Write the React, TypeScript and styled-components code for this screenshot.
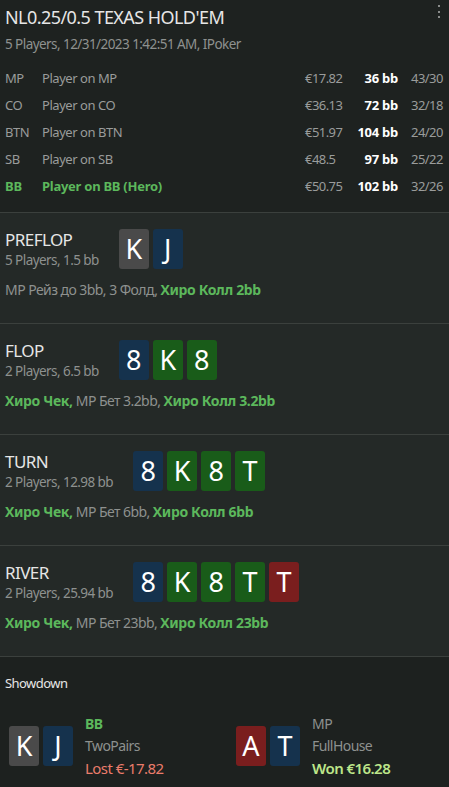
import React from "react";
import styled, { createGlobalStyle } from "styled-components";

const Global = createGlobalStyle`
  html, body { margin: 0; padding: 0; background: #1e2220; }
  body { font-family: "Noto Sans", "Open Sans", sans-serif; letter-spacing: -0.035em; -webkit-font-smoothing: antialiased; }
  * { box-sizing: border-box; }
`;

const Page = styled.div`
  width: 449px;
  min-height: 787px;
  background: #1e2220;
  display: flex;
  flex-direction: column;
`;

const Header = styled.header`
  position: relative;
  padding: 5px 4px 13px 5px;
  border-bottom: 1px solid #3b403d;
`;

const Title = styled.h1`
  margin: 0;
  font-size: 18px;
  font-weight: 400;
  line-height: 24px;
  color: #e6e6e6;
`;

const Meta = styled.div`
  font-size: 13.5px;
  line-height: 20px;
  margin-top: 5px;
  color: #8e918f;
`;

const MenuButton = styled.div`
  position: absolute;
  top: 3px;
  right: 7px;
  width: 6px;
  height: 18px;
  display: flex;
  justify-content: center;
`;

const Players = styled.div`
  margin-top: 10px;
  display: flex;
  flex-direction: column;
`;

const PlayerRow = styled.div<{ $hero?: boolean }>`
  display: grid;
  grid-template-columns: 37px 1fr 45px 48px 47px;
  height: 27px;
  align-items: center;
  font-size: 13px;
  color: #9a9c9b;
  & > .pos, & > .name {
    color: ${(p) => (p.$hero ? "#5cb85c" : "#9a9c9b")};
    font-weight: ${(p) => (p.$hero ? 700 : 400)};
    letter-spacing: ${(p) => (p.$hero ? "-0.02em" : "-0.035em")};
  }
`;

const Cell = styled.span``;

const BB = styled.span`
  text-align: right;
  color: #ffffff;
  font-weight: 700;
  letter-spacing: -0.02em;
`;

const Stats = styled.span`
  padding-left: 13px;
`;

const Street = styled.section`
  background: #242927;
  padding: 16px 5px 24px 5px;
  border-bottom: 1px solid #3b403d;
  &:last-of-type {
    border-bottom: none;
  }
`;

const StreetHead = styled.div`
  display: flex;
  align-items: center;
  gap: 20px;
`;

const StreetInfo = styled.div`
  display: flex;
  flex-direction: column;
`;

const StreetName = styled.div`
  font-size: 17px;
  line-height: 22px;
  color: #e6e6e6;
`;

const StreetSub = styled.div`
  font-size: 13.5px;
  line-height: 18px;
  color: #8e918f;
`;

const CardRow = styled.div`
  display: flex;
  gap: 4px;
`;

const cardColors: Record<string, string> = {
  gray: "#4a4a4a",
  blue: "#15324d",
  green: "#195c19",
  red: "#7a1e1e",
};

const Card = styled.div<{ $c: string }>`
  width: 30px;
  height: 40px;
  border-radius: 3px;
  background: ${(p) => cardColors[p.$c]};
  color: #ffffff;
  font-size: 27px;
  font-weight: 400;
  letter-spacing: 0;
  line-height: 40px;
  text-align: center;
`;

const Actions = styled.div`
  margin-top: 12px;
  font-size: 14px;
  line-height: 18px;
  color: #8e918f;
`;

const Hero = styled.span`
  color: #5cb85c;
  font-weight: 700;
  letter-spacing: -0.025em;
`;

const Showdown = styled.section`
  flex: 1;
  background: #1d211f;
  padding: 17px 0 0 5px;
`;

const ShowdownTitle = styled.div`
  font-size: 13px;
  line-height: 18px;
  color: #e6e6e6;
`;

const ShowdownGrid = styled.div`
  margin-top: 21px;
  display: grid;
  grid-template-columns: 227px 1fr;
  padding-left: 4px;
`;

const ShowPlayer = styled.div`
  display: flex;
  align-items: center;
  gap: 12px;
`;

const ShowInfo = styled.div`
  display: flex;
  flex-direction: column;
  font-size: 14px;
  line-height: 22px;
`;

const ShowPos = styled.span<{ $hero?: boolean }>`
  color: ${(p) => (p.$hero ? "#5cb85c" : "#8e918f")};
  font-weight: ${(p) => (p.$hero ? 700 : 400)};
`;

const ShowHand = styled.span`
  color: #8e918f;
`;

const Result = styled.span<{ $won?: boolean }>`
  font-size: 15px;
  color: ${(p) => (p.$won ? "#bde68a" : "#ea7c6b")};
  font-weight: ${(p) => (p.$won ? 600 : 400)};
`;

type C = [string, string];

const players = [
  { pos: "MP", name: "Player on MP", money: "€17.82", bb: "36 bb", stats: "43/30" },
  { pos: "CO", name: "Player on CO", money: "€36.13", bb: "72 bb", stats: "32/18" },
  { pos: "BTN", name: "Player on BTN", money: "€51.97", bb: "104 bb", stats: "24/20" },
  { pos: "SB", name: "Player on SB", money: "€48.5", bb: "97 bb", stats: "25/22" },
  { pos: "BB", name: "Player on BB (Hero)", money: "€50.75", bb: "102 bb", stats: "32/26", hero: true },
];

const streets: { name: string; sub: string; cards: C[]; actions: React.ReactNode }[] = [
  {
    name: "PREFLOP",
    sub: "5 Players, 1.5 bb",
    cards: [["K", "gray"], ["J", "blue"]],
    actions: (
      <>
        MP Рейз до 3bb, 3 Фолд, <Hero>Хиро Колл 2bb</Hero>
      </>
    ),
  },
  {
    name: "FLOP",
    sub: "2 Players, 6.5 bb",
    cards: [["8", "blue"], ["K", "green"], ["8", "green"]],
    actions: (
      <>
        <Hero>Хиро Чек,</Hero> MP Бет 3.2bb, <Hero>Хиро Колл 3.2bb</Hero>
      </>
    ),
  },
  {
    name: "TURN",
    sub: "2 Players, 12.98 bb",
    cards: [["8", "blue"], ["K", "green"], ["8", "green"], ["T", "green"]],
    actions: (
      <>
        <Hero>Хиро Чек,</Hero> MP Бет 6bb, <Hero>Хиро Колл 6bb</Hero>
      </>
    ),
  },
  {
    name: "RIVER",
    sub: "2 Players, 25.94 bb",
    cards: [["8", "blue"], ["K", "green"], ["8", "green"], ["T", "green"], ["T", "red"]],
    actions: (
      <>
        <Hero>Хиро Чек,</Hero> MP Бет 23bb, <Hero>Хиро Колл 23bb</Hero>
      </>
    ),
  },
];

const showdown = [
  { pos: "BB", hero: true, hand: "TwoPairs", result: "Lost €-17.82", won: false, cards: [["K", "gray"], ["J", "blue"]] as C[] },
  { pos: "MP", hero: false, hand: "FullHouse", result: "Won €16.28", won: true, cards: [["A", "red"], ["T", "blue"]] as C[] },
];

export default function App() {
  return (
    <Page>
      <Global />
      <Header>
        <Title>NL0.25/0.5 TEXAS HOLD'EM</Title>
        <Meta>5 Players, 12/31/2023 1:42:51 AM, IPoker</Meta>
        <MenuButton>
          <svg width="4" height="18" viewBox="0 0 4 18">
            <rect x="1" y="2" width="2" height="2" fill="#8a8c8b" />
            <rect x="1" y="8" width="2" height="2" fill="#8a8c8b" />
            <rect x="1" y="13" width="2" height="2" fill="#8a8c8b" />
          </svg>
        </MenuButton>
        <Players>
          {players.map((p) => (
            <PlayerRow key={p.pos} $hero={p.hero}>
              <Cell className="pos">{p.pos}</Cell>
              <Cell className="name">{p.name}</Cell>
              <Cell>{p.money}</Cell>
              <BB>{p.bb}</BB>
              <Stats>{p.stats}</Stats>
            </PlayerRow>
          ))}
        </Players>
      </Header>
      {streets.map((s) => (
        <Street key={s.name}>
          <StreetHead>
            <StreetInfo>
              <StreetName>{s.name}</StreetName>
              <StreetSub>{s.sub}</StreetSub>
            </StreetInfo>
            <CardRow>
              {s.cards.map(([r, c], i) => (
                <Card key={i} $c={c}>{r}</Card>
              ))}
            </CardRow>
          </StreetHead>
          <Actions>{s.actions}</Actions>
        </Street>
      ))}
      <Showdown>
        <ShowdownTitle>Showdown</ShowdownTitle>
        <ShowdownGrid>
          {showdown.map((p) => (
            <ShowPlayer key={p.pos}>
              <CardRow>
                {p.cards.map(([r, c], i) => (
                  <Card key={i} $c={c}>{r}</Card>
                ))}
              </CardRow>
              <ShowInfo>
                <ShowPos $hero={p.hero}>{p.pos}</ShowPos>
                <ShowHand>{p.hand}</ShowHand>
                <Result $won={p.won}>{p.result}</Result>
              </ShowInfo>
            </ShowPlayer>
          ))}
        </ShowdownGrid>
      </Showdown>
    </Page>
  );
}
